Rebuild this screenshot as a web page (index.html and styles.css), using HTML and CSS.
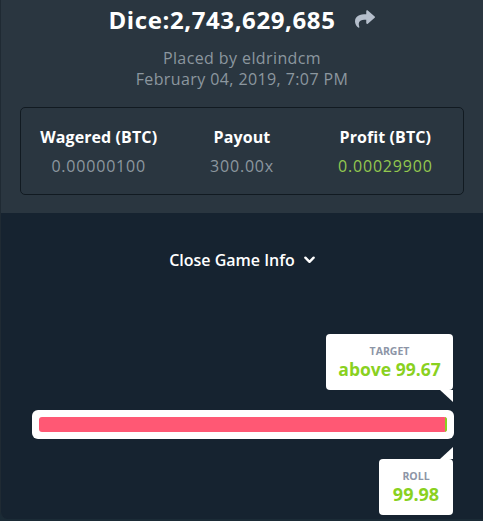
FILE: index.html
```html
<!DOCTYPE html>
<html lang="en">

<head>
    <meta charset="UTF-8">
    <meta name="viewport" content="width=device-width, initial-scale=1.0">
    <title>Dice bet</title>
    <link rel="stylesheet" href="styles.css">
</head>

<body>

    <div class="panel">
        <div class="info">
            <div class="title-row">
                <h1 class="title">Dice:2,743,629,685</h1>
                <svg class="share" viewBox="0 0 512 512">
                    <path d="M503.7 189.8L327.7 37.9C312.3 24.5 288 35.3 288 56v80.1C127.4 137.9 0 170.1 0 322.3c0 61.4 39.6 122.3 83.3 154.1 13.7 9.900 33.1-2.5 28.1-18.6C66.1 312.8 132.9 274.3 288 272.1V360c0 20.7 24.3 31.5 39.7 18.2l176-152c11.1-9.6 11.1-26.8 0-36.4z" />
                </svg>
            </div>

            <div class="meta">
                <div>Placed by eldrindcm</div>
                <div>February 04, 2019, 7:07 PM</div>
            </div>

            <div class="stats">
                <div class="stat">
                    <div class="stat-label">Wagered (BTC)</div>
                    <div class="stat-value">0.00000100</div>
                </div>
                <div class="stat">
                    <div class="stat-label">Payout</div>
                    <div class="stat-value">300.00x</div>
                </div>
                <div class="stat">
                    <div class="stat-label">Profit (BTC)</div>
                    <div class="stat-value win">0.00029900</div>
                </div>
            </div>
        </div>

        <div class="game">
            <div class="toggle">
                <span>Close Game Info</span>
                <svg class="chevron" viewBox="0 0 12 8">
                    <path d="M1.5 1.5L6 6l4.5-4.5" />
                </svg>
            </div>

            <div class="tip tip-top">
                <div class="tip-label">TARGET</div>
                <div class="tip-value">above 99.67</div>
            </div>

            <div class="slider">
                <div class="track">
                    <div class="track-win" style="width: 0.33%"></div>
                </div>
            </div>

            <div class="tip tip-bottom">
                <div class="tip-label">ROLL</div>
                <div class="tip-value big">99.98</div>
            </div>
        </div>
    </div>

</body>

</html>
```

FILE: styles.css
```css
body {
    margin: 0;
    padding: 0;
    background-color: #1b2b36;
    font-family: "Open Sans", Lato, sans-serif;
    color: #fff;
}

.panel {
    height: 519px;
    display: flex;
    flex-direction: column;
    border-left: 1px solid #1f2a33;
    border-radius: 0 0 0 8px;
    overflow: hidden;
}

.info {
    background-color: #2a3640;
    padding: 2px 19px 18px 19px;
}

.title-row {
    display: flex;
    justify-content: center;
    align-items: center;
    gap: 18px;
    height: 34px;
}

.title {
    margin: 0;
    font-size: 24px;
    font-weight: 700;
    letter-spacing: 0.6px;
}

.share {
    width: 22px;
    height: 20px;
    fill: #b5bfcc;
}

.meta {
    margin-top: 12px;
    text-align: center;
    color: #8c979f;
    font-size: 16px;
    letter-spacing: 0.4px;
    line-height: 21px;
}

.stats {
    margin-top: 17px;
    height: 86px;
    border: 1px solid #111a21;
    border-radius: 5px;
    display: flex;
    align-items: center;
    padding: 0 6px;
}

.stat {
    flex: 1;
    text-align: center;
}

.stat-label {
    font-size: 16px;
    font-weight: 700;
    line-height: 20px;
    letter-spacing: 0.1px;
}

.stat-value {
    margin-top: 9px;
    font-size: 16px;
    color: #8c979f;
    line-height: 20px;
    letter-spacing: 0.8px;
}

.stat-value.win {
    color: #93c84f;
}

.game {
    flex: 1;
    background-color: #162330;
    display: flex;
    flex-direction: column;
}

.toggle {
    margin-top: 36px;
    display: flex;
    justify-content: center;
    align-items: center;
    gap: 9px;
    font-size: 16px;
    font-weight: 600;
    height: 22px;
}

.chevron {
    width: 11px;
    height: 8px;
    fill: none;
    stroke: #fff;
    stroke-width: 2.6;
    stroke-linecap: round;
    stroke-linejoin: round;
}

.tip {
    position: relative;
    align-self: flex-end;
    margin-right: 30px;
    background-color: #fff;
    border-radius: 4px;
    height: 56px;
    display: flex;
    flex-direction: column;
    justify-content: center;
    align-items: center;
}

.tip::after {
    content: "";
    position: absolute;
    right: 0;
    border-left: 13px solid transparent;
}

.tip-top {
    margin-top: 63px;
    width: 127px;
}

.tip-top::after {
    top: 100%;
    border-top: 12px solid #fff;
}

.tip-bottom {
    margin-top: 20px;
    width: 74px;
}

.tip-bottom::after {
    bottom: 100%;
    border-bottom: 12px solid #fff;
}

.tip-label {
    font-size: 10.5px;
    font-weight: 700;
    color: #8d95a6;
    line-height: 14px;
}

.tip-value {
    font-size: 17.5px;
    font-weight: 700;
    color: #8ad11f;
    line-height: 22px;
}

.tip-value.big {
    font-size: 18px;
}

.slider {
    margin: 20px 29px 0 31px;
    background-color: #fff;
    border-radius: 6px;
    padding: 7px;
}

.track {
    height: 15px;
    background-color: #ff5874;
    border-radius: 3px;
    display: flex;
    justify-content: flex-end;
    overflow: hidden;
}

.track-win {
    min-width: 2px;
    background-color: #8ad11f;
}
```
